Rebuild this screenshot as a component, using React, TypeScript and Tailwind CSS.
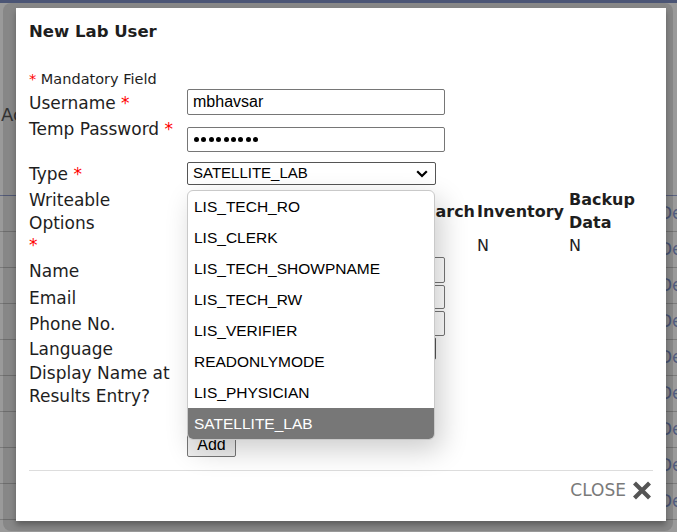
import * as React from 'react';

const roles = [
  'LIS_TECH_RO',
  'LIS_CLERK',
  'LIS_TECH_SHOWPNAME',
  'LIS_TECH_RW',
  'LIS_VERIFIER',
  'READONLYMODE',
  'LIS_PHYSICIAN',
  'SATELLITE_LAB',
];

function Req() {
  return <span className="text-[#ff0000]">*</span>;
}

function Label({ children }: { children: React.ReactNode }) {
  return <div className="w-[158px] shrink-0 pt-[2px] text-[17px] leading-[23px]">{children}</div>;
}

function TextBox({ value, h = 'h-[26px]' }: { value?: string; h?: string }) {
  return (
    <div
      className={`${h} w-[258px] border border-[#767676] rounded-[2px] pl-[5px] flex items-center font-['Liberation_Sans',sans-serif] text-[16px] text-black`}
    >
      {value}
    </div>
  );
}

function Chevron() {
  return (
    <svg width="12" height="8" viewBox="0 0 12 8" className="shrink-0">
      <path d="M1.2 1.2 L6 6 L10.8 1.2" fill="none" stroke="#000" strokeWidth="2.2" />
    </svg>
  );
}

function SelectBox({ value }: { value?: string }) {
  return (
    <div className="h-[23px] w-[249px] border border-[#555] rounded-[2px] pl-[5px] pr-[7px] flex items-center justify-between font-['Liberation_Sans',sans-serif] text-[15px] text-black">
      <span>{value}</span>
      <Chevron />
    </div>
  );
}

export default function App() {
  return (
    <div className="relative w-[677px] h-[532px] overflow-hidden bg-[#9a9a9a] font-['DejaVu_Sans',sans-serif]">
      {/* page behind the overlay */}
      <div className="h-[3px] bg-[#4b5575]" />
      <div className="h-[193px] border-b border-[#5c6482] pt-[98px] pl-[1px]">
        <div className="w-[16px] overflow-hidden whitespace-nowrap text-[18px] text-[#3a3a3a]">Ac</div>
      </div>
      {Array.from({ length: 9 }).map((_, i) => (
        <div
          key={i}
          className="h-[36px] border-b border-[#7b7b7b] flex items-center pl-[659px] text-[17px] text-[#505c7e]"
        >
          Delete
        </div>
      ))}

      {/* dialog wrapper tint */}
      <div className="absolute left-[3px] top-[3px] right-[4px] bottom-[1px] rounded-[8px] bg-[rgba(0,0,0,0.12)]" />

      {/* modal */}
      <div className="absolute left-[16px] top-[8px] w-[650px] h-[513px] bg-white shadow-[0_4px_6px_rgba(0,0,0,0.3)] px-[13px] pt-[12px] text-[#1e1e1e]">
        <h2 className="text-[16.5px] font-bold leading-[24px]">New Lab User</h2>
        <div className="mt-[24px] pt-[1px] text-[14.5px] leading-[20px]">
          <Req /> Mandatory Field
        </div>

        <div className="flex items-center h-[26px]">
          <Label>
            Username <Req />
          </Label>
          <TextBox value="mbhavsar" h="h-[26px]" />
        </div>

        <div className="flex items-start h-[37px]">
          <div className="mt-[1px]">
            <Label>
              Temp Password <Req />
            </Label>
          </div>
          <div className="mt-[12px] h-[25px] w-[258px] border border-[#767676] rounded-[2px] pl-[6px] flex items-center gap-[2.4px]">
            {Array.from({ length: 9 }).map((_, i) => (
              <span key={i} className="w-[5px] h-[5px] rounded-full bg-black" />
            ))}
          </div>
        </div>

        <div className="mt-[10px] flex items-center h-[23px]">
          <Label>
            Type <Req />
          </Label>
          <SelectBox value="SATELLITE_LAB" />
        </div>

        <div className="mt-[2px] flex items-start">
          <div className="w-[158px] shrink-0 pt-[2px] text-[17px]">
            <div className="leading-[23px]">Writeable</div>
            <div className="leading-[23px]">Options</div>
            <div className="leading-[21px]">
              <Req />
            </div>
          </div>
          <div className="h-[69px] pt-[1.5px] text-[16px] leading-[23px]">
            <div className="flex items-center h-[45px] font-bold gap-[2px]">
              <div className="w-[288px] text-right">Order Edit Search</div>
              <div className="w-[90px]">Inventory</div>
              <div>
                Backup
                <br />
                Data
              </div>
            </div>
            <div className="flex items-center h-[24px] gap-[2px]">
              <div className="w-[288px] pl-[222px]">N</div>
              <div className="w-[90px]">N</div>
              <div>N</div>
            </div>
          </div>
        </div>

        <div className="mt-[1px] flex items-center h-[26px]">
          <Label>Name</Label>
          <TextBox h="h-[26px]" />
        </div>
        <div className="mt-[2px] flex items-center h-[24px]">
          <Label>Email</Label>
          <TextBox h="h-[24px]" />
        </div>
        <div className="mt-[2px] flex items-center h-[25px]">
          <Label>Phone No.</Label>
          <TextBox h="h-[25px]" />
        </div>
        <div className="mt-[1px] flex items-center h-[23px]">
          <Label>Language</Label>
          <SelectBox />
        </div>
        <div className="flex items-start">
          <Label>
            Display Name at
            <br />
            Results Entry?
          </Label>
          <div className="mt-[6px] w-[13px] h-[13px] border border-[#767676] rounded-[2px]" />
        </div>

        <div className="mt-[25px] pl-[158px]">
          <button className="h-[23px] w-[49px] bg-[#efefef] border border-[#767676] rounded-[2px] font-['Liberation_Sans',sans-serif] text-[16px] text-black leading-none">
            Add
          </button>
        </div>

        <div className="mt-[13px] border-t border-[#dddddd]" />

        <div className="h-[39px] flex items-center justify-end gap-[6px] pr-[1px]">
          <span className="text-[17px] text-[#7a7a7a]">CLOSE</span>
          <svg width="20" height="19" viewBox="0 0 20 19">
            <path d="M2.5 2 L17.5 17 M17.5 2 L2.5 17" stroke="#555" strokeWidth="4.2" />
          </svg>
        </div>

        {/* open select list */}
        <div className="absolute left-[171px] top-[182px] w-[248px] bg-white border border-[#c9c9c9] rounded-[6px] overflow-hidden shadow-[6px_10px_28px_rgba(0,0,0,0.2)] font-['Liberation_Sans',sans-serif] text-[15.5px]">
          {roles.map((r) => (
            <div
              key={r}
              className={`h-[31px] flex items-center pl-[6px] pt-[1px] ${
                r === 'SATELLITE_LAB' ? 'bg-[#777777] text-white' : 'text-black'
              }`}
            >
              {r}
            </div>
          ))}
        </div>
      </div>
    </div>
  );
}
